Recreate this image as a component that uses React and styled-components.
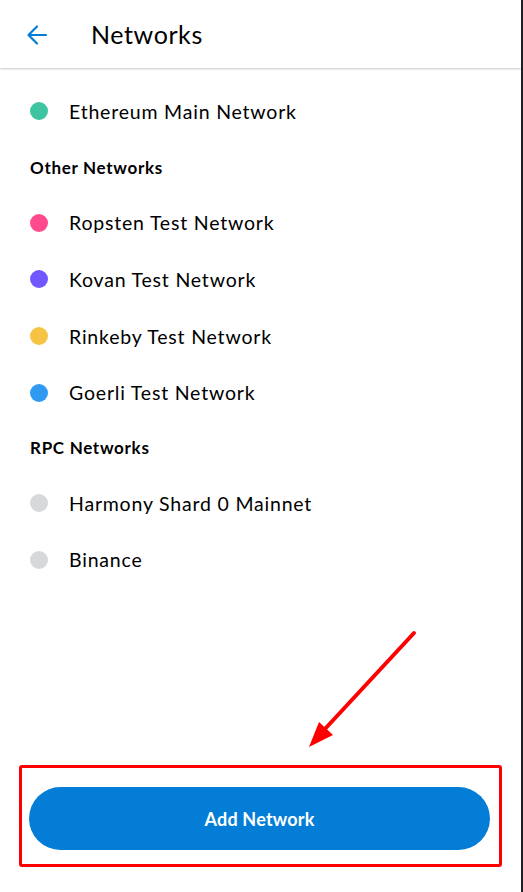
import React from "react";
import styled, { createGlobalStyle } from "styled-components";

const GlobalStyle = createGlobalStyle`
  html, body {
    margin: 0;
    padding: 0;
    background: #1f2024;
  }
  * {
    box-sizing: border-box;
  }
`;

const Page = styled.div`
  position: relative;
  width: 521px;
  height: 892px;
  background: #ffffff;
  display: flex;
  flex-direction: column;
  font-family: Lato, "Noto Sans", sans-serif;
  color: #000000;
  overflow: hidden;
`;

const Header = styled.header`
  height: 68px;
  flex: none;
  display: flex;
  align-items: center;
  padding-left: 26px;
  gap: 43px;
  box-shadow: 0 1px 2px rgba(0, 0, 0, 0.22);
  position: relative;
  z-index: 1;
`;

const BackButton = styled.button`
  border: none;
  background: none;
  padding: 0;
  width: 22px;
  height: 22px;
  display: flex;
  align-items: center;
  justify-content: center;
  cursor: pointer;
  margin-top: 2px;
`;

const Title = styled.h1`
  margin: 0 0 1px;
  font-size: 25px;
  font-weight: 400;
  letter-spacing: 0.6px;
`;

const List = styled.div`
  display: flex;
  flex-direction: column;
  padding-top: 15px;
`;

const Row = styled.div`
  height: 56.6px;
  display: flex;
  align-items: center;
  padding-left: 30px;
  gap: 21px;
`;

const Dot = styled.span`
  width: 18px;
  height: 18px;
  border-radius: 50%;
  background: ${(p) => p.color};
  flex: none;
`;

const Name = styled.span`
  font-size: 19.5px;
  letter-spacing: 0.8px;
`;

const SectionTitle = styled.div`
  height: ${(p) => p.h || 55}px;
  display: flex;
  align-items: center;
  padding-left: 30px;
  font-size: 17px;
  font-weight: 700;
  letter-spacing: 0.7px;
`;

const Spacer = styled.div`
  flex: 1;
`;

const Footer = styled.div`
  padding: 0 19px 25px 19px;
`;

const Highlight = styled.div`
  border: 3px solid #ff0000;
  border-radius: 3px;
  padding: 19px 9px 14px 7px;
`;

const AddButton = styled.button`
  width: 100%;
  height: 63px;
  border: none;
  border-radius: 32px;
  background: #037dd6;
  color: #ffffff;
  font-family: Lato, "Noto Sans", sans-serif;
  font-size: 18px;
  font-weight: 700;
  letter-spacing: 0.2px;
  cursor: pointer;
`;

const Pointer = styled.svg`
  position: absolute;
  left: 300px;
  top: 625px;
`;

const main = [{ name: "Ethereum Main Network", color: "#3ec4a0" }];
const other = [
  { name: "Ropsten Test Network", color: "#ff4a8d" },
  { name: "Kovan Test Network", color: "#7057ff" },
  { name: "Rinkeby Test Network", color: "#f6c343" },
  { name: "Goerli Test Network", color: "#3099f2" },
];
const rpc = [
  { name: "Harmony Shard 0 Mainnet", color: "#d6d9dc" },
  { name: "Binance", color: "#d6d9dc" },
];

const NetworkRow = ({ item }) => (
  <Row>
    <Dot color={item.color} />
    <Name>{item.name}</Name>
  </Row>
);

export default function App() {
  return (
    <>
      <GlobalStyle />
      <Page>
        <Header>
          <BackButton aria-label="Back">
            <svg width="22" height="22" viewBox="0 0 22 22" fill="none">
              <path
                d="M20 11H3M11 2.5L2.5 11L11 19.5"
                stroke="#037dd6"
                strokeWidth="2.2"
                strokeLinecap="round"
                strokeLinejoin="round"
              />
            </svg>
          </BackButton>
          <Title>Networks</Title>
        </Header>
        <List>
          {main.map((n) => (
            <NetworkRow key={n.name} item={n} />
          ))}
          <SectionTitle>Other Networks</SectionTitle>
          {other.map((n) => (
            <NetworkRow key={n.name} item={n} />
          ))}
          <SectionTitle h={54}>RPC Networks</SectionTitle>
          {rpc.map((n) => (
            <NetworkRow key={n.name} item={n} />
          ))}
        </List>
        <Spacer />
        <Footer>
          <Highlight>
            <AddButton>Add Network</AddButton>
          </Highlight>
        </Footer>
        <Pointer width="125" height="130" viewBox="300 625 125 130">
          <line
            x1="414"
            y1="633"
            x2="324"
            y2="730"
            stroke="#ff0000"
            strokeWidth="4"
            strokeLinecap="round"
          />
          <polygon points="309,747 319,722 333,735" fill="#ff0000" />
        </Pointer>
      </Page>
    </>
  );
}
